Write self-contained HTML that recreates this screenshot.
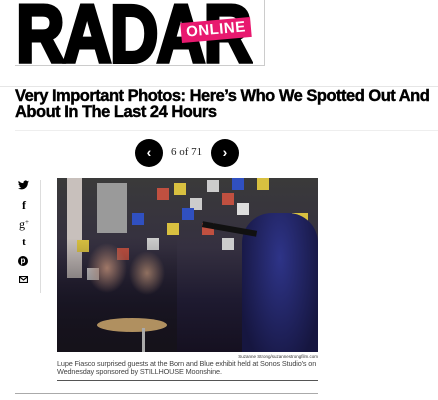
<!DOCTYPE html>
<html><head><style>
body{margin:0;width:438px;height:400px;background:#fff;position:relative;overflow:hidden;font-family:"Liberation Sans",sans-serif}
.a{position:absolute}
.sq{position:absolute;width:12px;height:12px}
.ic{position:absolute;left:17px;width:14px;text-align:center;font-weight:bold;color:#000;line-height:12px}
</style></head><body>
<div class="a" style="left:15px;top:0;width:250px;height:66px;border-right:1px solid #ccc;border-bottom:1px solid #ccc;box-sizing:border-box"></div>
<div class="a" style="left:16px;top:-6px;font-size:82px;font-weight:bold;color:#000;-webkit-text-stroke:4px #000;transform:scaleX(0.82);transform-origin:0 0;letter-spacing:-2px;line-height:82px">RADAR</div>
<div class="a" style="left:181px;top:20px;width:70px;height:20px;background:#e8196f;transform:rotate(-5deg);color:#fff;font-weight:bold;font-size:15px;line-height:20px;text-align:center;letter-spacing:0.5px">ONLINE</div>
<div class="a" style="left:0;top:86px;width:438px;height:1px;background:#e6e6e6"></div>
<div class="a" style="left:15px;top:88px;font-size:16.5px;font-weight:bold;line-height:16px;color:#000;letter-spacing:-0.5px;white-space:nowrap;-webkit-text-stroke:0.4px #000">Very Important Photos: Here’s Who We Spotted Out And<br>About In The Last 24 Hours</div>
<div class="a" style="left:15px;top:130px;width:423px;height:1px;background:#eee"></div>
<div class="a" style="left:135px;top:139px;width:28px;height:28px;border-radius:50%;background:#000;color:#fff;font-size:14px;font-weight:bold;text-align:center;line-height:27px">‹</div>
<div class="a" style="left:171px;top:146px;font-size:11px;font-family:'Liberation Serif',serif;color:#222">6 of 71</div>
<div class="a" style="left:211px;top:139px;width:28px;height:28px;border-radius:50%;background:#000;color:#fff;font-size:14px;font-weight:bold;text-align:center;line-height:27px">›</div>
<svg class="a" style="left:18px;top:180px" width="11" height="10" viewBox="0 0 24 20"><path d="M24 2.4c-.9.4-1.8.6-2.8.8 1-.6 1.8-1.6 2.2-2.7-1 .6-2 1-3.1 1.2A4.9 4.9 0 0 0 11.9 6 14 14 0 0 1 1.7.9a4.9 4.9 0 0 0 1.5 6.6c-.8 0-1.6-.3-2.2-.6 0 2.4 1.7 4.4 3.9 4.8-.7.2-1.5.2-2.2.1.6 2 2.4 3.4 4.6 3.4A9.9 9.900 0 0 1 0 17.3 14 14 0 0 0 7.5 19.5c9.1 0 14-7.5 14-14v-.6c1-.7 1.8-1.6 2.5-2.5z" fill="#000"/></svg>
<div class="ic" style="top:199px;font-size:12px;font-family:'Liberation Serif'">f</div>
<div class="ic" style="top:216px;font-size:12px;font-family:'Liberation Serif';font-weight:normal">g<span style="font-size:7px;vertical-align:4px">+</span></div>
<div class="ic" style="top:236px;font-size:11px;font-family:'Liberation Serif'">t</div>
<div class="a" style="left:18px;top:256px;width:10px;height:10px;border-radius:50%;background:#000;color:#fff;font-size:8px;font-weight:bold;text-align:center;line-height:10px">p</div>
<svg class="a" style="left:19px;top:276px" width="9" height="7" viewBox="0 0 9 7"><rect x=".5" y=".5" width="8" height="6" fill="none" stroke="#000" stroke-width="1.2"/><path d="M.5 .8L4.5 4 8.5 .8" fill="none" stroke="#000" stroke-width="1.2"/></svg>
<div class="a" style="left:40px;top:180px;width:1px;height:113px;background:#ddd"></div>
<div class="a" style="left:57px;top:178px;width:261px;height:174px;overflow:hidden;background:linear-gradient(180deg,#3a3a3a 0%,#353040 40%,#1e1a30 70%,#151020 100%)">
<div class="sq" style="left:10px;top:0;width:15px;height:100px;background:#c8c0bc"></div>
<div class="sq" style="left:40px;top:5px;width:30px;height:50px;background:#9a9a9a"></div>
<div class="sq" style="left:100px;top:10px;background:#c05040"></div>
<div class="sq" style="left:117px;top:5px;background:#d8c040"></div>
<div class="sq" style="left:133px;top:20px;background:#ccc"></div>
<div class="sq" style="left:125px;top:30px;background:#3050c0"></div>
<div class="sq" style="left:150px;top:2px;background:#ccc"></div>
<div class="sq" style="left:165px;top:15px;background:#c05040"></div>
<div class="sq" style="left:180px;top:25px;background:#ddd"></div>
<div class="sq" style="left:110px;top:45px;background:#d8c040"></div>
<div class="sq" style="left:90px;top:60px;background:#ccc"></div>
<div class="sq" style="left:60px;top:70px;background:#c05040"></div>
<div class="sq" style="left:75px;top:35px;background:#3050c0"></div>
<div class="sq" style="left:145px;top:45px;background:#c05040"></div>
<div class="sq" style="left:175px;top:0px;background:#3050c0"></div>
<div class="sq" style="left:200px;top:0;background:#d8c040"></div>
<div class="sq" style="left:235px;top:35px;width:16px;background:#d8c040"></div>
<div class="sq" style="left:20px;top:62px;background:#d8c040"></div>
<div class="sq" style="left:30px;top:90px;background:#ddd"></div>
<div class="sq" style="left:165px;top:60px;background:#ccc"></div>
<div class="a" style="left:185px;top:35px;width:76px;height:150px;border-radius:30px 30px 0 0;background:radial-gradient(ellipse at 50% 30%,#2e3488,#161640 80%)"></div>
<div class="a" style="left:145px;top:48px;width:55px;height:6px;background:#111;transform:rotate(10deg)"></div>
<div class="a" style="left:0;top:60px;width:120px;height:114px;background:radial-gradient(ellipse 20px 25px at 50px 30px,#a07868,transparent),radial-gradient(ellipse 18px 22px at 90px 35px,#907060,transparent),linear-gradient(transparent,#15121a)"></div>
<div class="a" style="left:40px;top:140px;width:70px;height:14px;border-radius:50%;background:#b09060"></div>
<div class="a" style="left:85px;top:150px;width:3px;height:24px;background:#aaa"></div>
</div>
<div class="a" style="left:57px;top:354px;width:261px;text-align:right;font-size:4.5px;color:#333">Suzanne Strong/suzannestrongfilm.com</div>
<div class="a" style="left:57px;top:360px;width:265px;font-size:7.3px;line-height:7.5px;color:#444;letter-spacing:-0.15px">Lupe Fiasco surprised guests at the Born and Blue exhibit held at Sonos Studio's on Wednesday sponsored by STILLHOUSE Moonshine.</div>
<div class="a" style="left:57px;top:380px;width:261px;height:1px;background:#555"></div>
<div class="a" style="left:15px;top:393px;width:303px;height:1px;background:#aaa"></div>
</body></html>
